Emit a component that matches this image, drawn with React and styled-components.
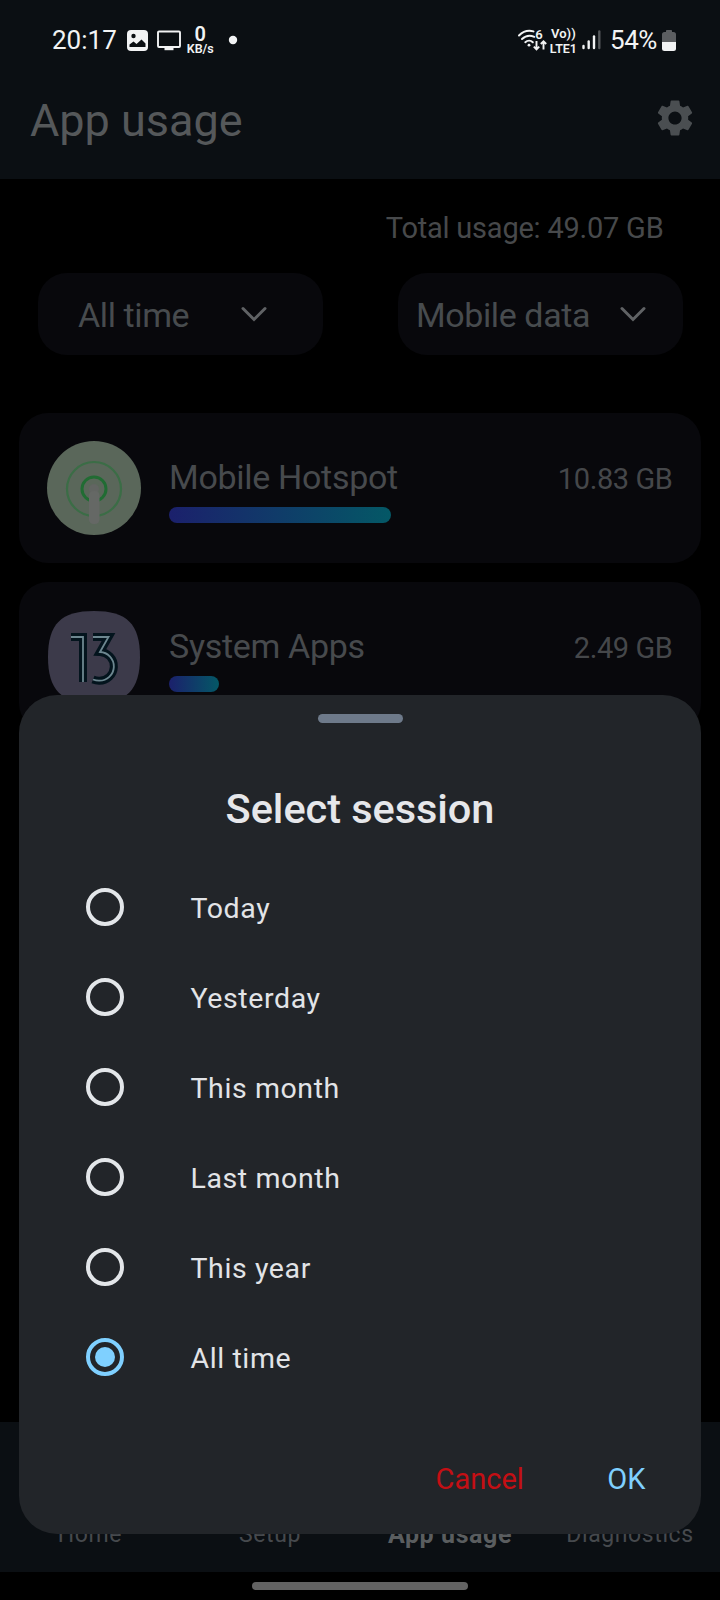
import styled, { createGlobalStyle, css } from "styled-components";
import { useState } from "react";
import { MdSettings } from "react-icons/md";

const GlobalStyle = createGlobalStyle`
  * {
    box-sizing: border-box;
  }
  body {
    margin: 0;
    background: #000;
    font-family: Roboto, "Liberation Sans", sans-serif;
  }
  button {
    border: none;
    background: none;
    padding: 0;
    font-family: inherit;
  }
`;

const Screen = styled.div`
  position: relative;
  width: 720px;
  height: 1600px;
  overflow: hidden;
  background: #000;
  display: flex;
  flex-direction: column;
`;

const Header = styled.header`
  height: 179px;
  flex: none;
  background: #0b0f13;
`;

const StatusBar = styled.div`
  height: 80px;
  padding: 0 44px 0 52px;
  display: flex;
  align-items: center;
  justify-content: space-between;
  color: #f2f3f4;
`;

const StatusGroup = styled.div`
  display: flex;
  align-items: center;
  height: 30px;
`;

const StatusText = styled.span`
  font-size: 26px;
  line-height: 30px;
  letter-spacing: ${(props) => props.$spacing || "0"};
  margin-left: ${(props) => props.$gap || 0}px;
`;

const StatusIcon = styled.svg`
  display: block;
  flex: none;
  margin-left: ${(props) => props.$gap}px;
  font-family: Roboto, "Liberation Sans", sans-serif;
`;

const StatusStack = styled.div`
  width: ${(props) => props.$width}px;
  height: 30px;
  margin-left: ${(props) => props.$gap}px;
  display: flex;
  flex-direction: column;
  align-items: center;
  white-space: nowrap;
`;

const StackTop = styled.span`
  font-size: ${(props) => props.$size}px;
  line-height: 18px;
  font-weight: ${(props) => props.$weight};
`;

const StackBottom = styled.span`
  font-size: ${(props) => props.$size}px;
  line-height: 12px;
  font-weight: ${(props) => props.$weight};
`;

const TitleRow = styled.div`
  height: 82px;
  padding: 0 23.5px 0 30px;
  display: flex;
  align-items: center;
  justify-content: space-between;
`;

const Title = styled.h1`
  margin: 0;
  font-size: 45px;
  line-height: 52px;
  font-weight: 400;
  color: #55585a;
`;

const SettingsButton = styled.button`
  width: 44px;
  height: 44px;
  margin-bottom: 7px;
  font-size: 44px;
  line-height: 0;
  color: #4a4e51;
`;

const Main = styled.main`
  flex: 1;
  min-height: 0;
  overflow: hidden;
  padding: 31px 19px 0;
`;

const Total = styled.div`
  padding-right: 37.5px;
  font-size: 29px;
  line-height: 36px;
  letter-spacing: -0.22px;
  text-align: right;
  color: #47494b;
`;

const Filters = styled.div`
  display: flex;
  justify-content: space-between;
  padding: 0 18px 0 18.5px;
  margin-top: 27px;
`;

const Filter = styled.button`
  width: 285px;
  height: 82px;
  padding: ${(props) => props.$pad};
  border-radius: 29px;
  background: #08080c;
  display: flex;
  align-items: center;
  justify-content: space-between;
  font-size: 34px;
  line-height: 40px;
  letter-spacing: -0.4px;
  color: #474b4e;
`;

const FilterLabel = styled.span`
  padding-top: 2px;
`;

const List = styled.div`
  display: flex;
  flex-direction: column;
  gap: 19px;
  margin-top: 58px;
`;

const Card = styled.div`
  height: 150px;
  padding: 28px 28.5px 28px 28px;
  border-radius: 29px;
  background: #08080c;
  display: flex;
`;

const AppIcon = styled.svg`
  flex: none;
  width: 94px;
  height: 94px;
`;

const Usage = styled.div`
  flex: 1;
  padding-top: 16px;
  margin-left: 28px;
`;

const UsageLine = styled.div`
  display: flex;
  align-items: center;
  justify-content: space-between;
  height: 40px;
`;

const AppName = styled.span`
  font-size: 34px;
  line-height: 40px;
  letter-spacing: -0.3px;
  color: #474a4d;
`;

const Amount = styled.span`
  font-size: 29px;
  line-height: 36px;
  letter-spacing: -0.4px;
  padding-top: 3px;
  color: #45474a;
`;

const Bar = styled.div`
  height: 16px;
  margin-top: 10px;
  border-radius: 8px;
  background: linear-gradient(90deg, #1b206c, #045866);
`;

const Nav = styled.nav`
  height: 150px;
  flex: none;
  background: #0b0f13;
  display: grid;
  grid-template-columns: repeat(4, 1fr);
  align-items: end;
  padding-bottom: 22.5px;
`;

const NavItem = styled.span`
  text-align: center;
  font-size: 23px;
  line-height: 30px;
  letter-spacing: 0.6px;
  color: #46494d;
  ${(props) =>
    props.$active &&
    css`
      font-size: 25px;
      font-weight: 700;
      color: #5a5d5f;
    `}
`;

const GestureArea = styled.div`
  height: 28px;
  flex: none;
  display: flex;
  justify-content: center;
  padding-top: 10px;
`;

const GesturePill = styled.div`
  width: 216px;
  height: 8px;
  border-radius: 4px;
  background: #636363;
`;

const Sheet = styled.section`
  position: absolute;
  left: 19px;
  right: 19px;
  top: 695px;
  height: 839px;
  border-radius: 38px;
  background: #222529;
  display: flex;
  flex-direction: column;
`;

const Handle = styled.div`
  width: 85px;
  height: 9px;
  margin: 19px auto 0;
  border-radius: 5px;
  background: #6e7a8a;
`;

const SheetTitle = styled.h2`
  margin: 62px 0 0;
  text-align: center;
  font-size: 41.5px;
  line-height: 48px;
  font-weight: 500;
  letter-spacing: -0.05px;
  color: #e6e7ea;
`;

const Options = styled.div`
  margin-top: 29px;
  padding-left: 66.5px;
`;

const Option = styled.button`
  width: 100%;
  height: 90px;
  display: flex;
  align-items: center;
  gap: 67px;
  font-size: 28.5px;
  line-height: 36px;
  letter-spacing: 0.6px;
  color: #e2e4e7;
`;

const OptionLabel = styled.span`
  padding-top: 4px;
`;

const Radio = styled.span`
  width: 38px;
  height: 38px;
  border: 4px solid ${(props) => (props.$checked ? "#7fd0ff" : "#e3e6e9")};
  border-radius: 50%;
  display: flex;
  align-items: center;
  justify-content: center;
`;

const RadioDot = styled.span`
  width: 20px;
  height: 20px;
  border-radius: 50%;
  background: #7fd0ff;
`;

const Actions = styled.div`
  display: flex;
  justify-content: flex-end;
  gap: 83.5px;
  margin-top: 59px;
  padding-right: 55.5px;
`;

const Action = styled.button`
  font-size: 29px;
  line-height: 36px;
  color: ${(props) => props.$color};
`;

const sessions = [
  "Today",
  "Yesterday",
  "This month",
  "Last month",
  "This year",
  "All time",
];

const PictureIcon = () => (
  <StatusIcon $gap={10.5} width="21" height="21" viewBox="0 0 21 21">
    <rect width="21" height="21" rx="4" fill="#f2f3f4" />
    <circle cx="6.5" cy="6" r="2.2" fill="#0b0f13" />
    <path
      d="M2.5 17V14.5L6.5 11.500L9.5 14L14.5 9.5L18.5 13.5V17Z"
      fill="#0b0f13"
    />
  </StatusIcon>
);

const MonitorIcon = () => (
  <StatusIcon $gap={9} width="24" height="21" viewBox="0 0 24 21">
    <rect
      x="1"
      y="1.5"
      width="22"
      height="15.5"
      rx="1"
      fill="none"
      stroke="#f2f3f4"
      strokeWidth="1.9"
    />
    <rect x="7.5" y="17" width="9" height="3.2" fill="#f2f3f4" />
  </StatusIcon>
);

const DotIcon = () => (
  <StatusIcon $gap={14.5} width="10" height="10" viewBox="0 0 10 10">
    <circle cx="5" cy="5" r="4.2" fill="#f2f3f4" />
  </StatusIcon>
);

const WifiIcon = () => (
  <StatusIcon $gap={0} width="30" height="30" viewBox="0 0 30 30">
    <g fill="none" stroke="#f2f3f4" strokeWidth="2" strokeLinecap="round">
      <path d="M2 10.5C6.5 6 12 5.2 16.5 6.400" />
      <path d="M5 14C8.5 10.600 13.5 10.100 17.300 11.800" />
      <path d="M8.300 17.200C10.5 15.200 13.700 15.200 15.800 17.200" />
    </g>
    <circle cx="12" cy="20.200" r="1.400" fill="#f2f3f4" />
    <text x="18.2" y="13.8" fontSize="13" fontWeight="600" fill="#f2f3f4">
      6
    </text>
    <g fill="none" stroke="#f2f3f4" strokeWidth="1.9">
      <path d="M19.5 16V24M16.800 21.600L19.5 24.300L22.200 21.600" />
      <path d="M26.5 24.500V16.5M23.800 19L26.5 16.300L29.200 19" />
    </g>
  </StatusIcon>
);

const SignalIcon = () => (
  <StatusIcon $gap={5.5} width="19" height="20" viewBox="0 0 19 20">
    <g stroke="#f2f3f4" strokeWidth="2.4" strokeLinecap="round">
      <path d="M1.5 16V18" />
      <path d="M6.700 11.5V18" />
      <path d="M12 6.5V18" />
      <path d="M17.300 1.5V18" stroke="#54575a" />
    </g>
  </StatusIcon>
);

const BatteryIcon = () => (
  <StatusIcon $gap={5} width="14" height="21" viewBox="0 0 14 21">
    <path
      d="M4 2V0.800Q4 0 4.800 0H9.200Q10 0 10 0.800V2H11.5Q14 2 14 4.5V12H0V4.5Q0 2 2.5 2Z"
      fill="#5c5e61"
    />
    <path d="M0 12H14V18.5Q14 21 11.5 21H2.5Q0 21 0 18.5Z" fill="#f2f3f4" />
  </StatusIcon>
);

const Chevron = () => (
  <svg width="26" height="16" viewBox="0 0 26 16" fill="none">
    <path
      d="M2 2.5L13 13.5L24 2.5"
      stroke="#606265"
      strokeWidth="3"
      strokeLinecap="round"
    />
  </svg>
);

const HotspotIcon = () => (
  <AppIcon viewBox="0 0 94 94" fill="none">
    <circle cx="47" cy="47" r="47" fill="#5a675a" />
    <circle cx="47" cy="48" r="27" stroke="#3b6d46" strokeWidth="2.2" />
    <circle cx="47" cy="48" r="12" stroke="#216c33" strokeWidth="3" />
    <circle cx="47" cy="48" r="5" fill="#626562" />
    <rect x="42" y="50" width="10.5" height="33" rx="4.5" fill="#656865" />
  </AppIcon>
);

const SystemIcon = () => (
  <AppIcon viewBox="0 0 94 94" fill="none">
    <path
      d="M47 1C80 1 93 14 93 47S80 93 47 93S1 80 1 47S14 1 47 1Z"
      fill="#3c3a4a"
    />
    <g stroke="#03141d" strokeWidth="8">
      <path d="M24 27H36V72" />
      <path d="M46 27H61.5L53 42A14.3 14.3 0 0 1 52 70.700Q49 70.700 46 69.500" />
    </g>
    <g stroke="#6d8790" strokeWidth="1.8">
      <path d="M24 27H36V72" />
      <path d="M46 27H61.5L53 42A14.3 14.3 0 0 1 52 70.700Q49 70.700 46 69.500" />
    </g>
  </AppIcon>
);

const apps = [
  { name: "Mobile Hotspot", amount: "10.83 GB", width: 222, Icon: HotspotIcon },
  { name: "System Apps", amount: "2.49 GB", width: 50, Icon: SystemIcon },
];

const App = () => {
  const [session, setSession] = useState("All time");

  return (
    <>
      <GlobalStyle />
      <Screen>
        <Header>
          <StatusBar>
            <StatusGroup>
              <StatusText>20:17</StatusText>
              <PictureIcon />
              <MonitorIcon />
              <StatusStack $gap={6} $width={26}>
                <StackTop $size={20} $weight={600}>
                  0
                </StackTop>
                <StackBottom $size={12.5} $weight={600}>
                  KB/s
                </StackBottom>
              </StatusStack>
              <DotIcon />
            </StatusGroup>
            <StatusGroup>
              <WifiIcon />
              <StatusStack $gap={3} $width={26}>
                <StackTop $size={13} $weight={600}>
                  Vo))
                </StackTop>
                <StackBottom $size={12.5} $weight={600}>
                  LTE1
                </StackBottom>
              </StatusStack>
              <SignalIcon />
              <StatusText $gap={9} $spacing="-0.4px">
                54%
              </StatusText>
              <BatteryIcon />
            </StatusGroup>
          </StatusBar>
          <TitleRow>
            <Title>App usage</Title>
            <SettingsButton>
              <MdSettings />
            </SettingsButton>
          </TitleRow>
        </Header>
        <Main>
          <Total>Total usage: 49.07 GB</Total>
          <Filters>
            <Filter $pad="0 56px 0 40.5px">
              <FilterLabel>All time</FilterLabel>
              <Chevron />
            </Filter>
            <Filter $pad="0 37.5px 0 18px">
              <FilterLabel>Mobile data</FilterLabel>
              <Chevron />
            </Filter>
          </Filters>
          <List>
            {apps.map(({ name, amount, width, Icon }) => (
              <Card key={name}>
                <Icon />
                <Usage>
                  <UsageLine>
                    <AppName>{name}</AppName>
                    <Amount>{amount}</Amount>
                  </UsageLine>
                  <Bar style={{ width }} />
                </Usage>
              </Card>
            ))}
          </List>
        </Main>
        <Nav>
          <NavItem>Home</NavItem>
          <NavItem>Setup</NavItem>
          <NavItem $active>App usage</NavItem>
          <NavItem>Diagnostics</NavItem>
        </Nav>
        <GestureArea>
          <GesturePill />
        </GestureArea>
        <Sheet>
          <Handle />
          <SheetTitle>Select session</SheetTitle>
          <Options>
            {sessions.map((item) => (
              <Option key={item} onClick={() => setSession(item)}>
                <Radio $checked={item === session}>
                  {item === session && <RadioDot />}
                </Radio>
                <OptionLabel>{item}</OptionLabel>
              </Option>
            ))}
          </Options>
          <Actions>
            <Action $color="#c40f14">Cancel</Action>
            <Action $color="#7fd0ff">OK</Action>
          </Actions>
        </Sheet>
      </Screen>
    </>
  );
};

export default App;
